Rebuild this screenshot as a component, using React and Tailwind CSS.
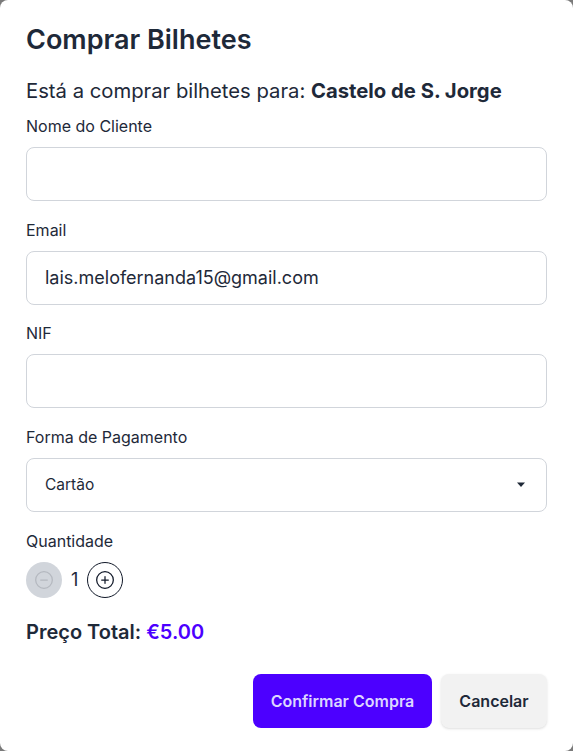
import { CirclePlus, CircleMinus } from 'lucide-react';

function Field({ label, value }) {
  return (
    <div className="mb-[16.5px]">
      <label className="block text-[16px] leading-6 text-gray-800 mb-[9px]">{label}</label>
      <div className="h-[54px] w-full rounded-lg border border-[#d1d5db] bg-white px-[18px] flex items-center text-[18px] text-gray-800">
        {value}
      </div>
    </div>
  );
}

export default function App() {
  return (
    <div className="h-[751px] w-[573px] bg-[#7a7a7a]" style={{ fontFamily: 'Inter, "Noto Sans", sans-serif' }}>
      <div className="h-full w-full rounded-lg bg-white px-[26px] pt-[24px] text-gray-800">
        {/* Header */}
        <h2 className="text-[27px] leading-8 font-semibold text-gray-800">Comprar Bilhetes</h2>
        <p className="mt-[21px] text-[20.25px] leading-7 text-gray-800">
          Está a comprar bilhetes para: <span className="font-bold">Castelo de S. Jorge</span>
        </p>

        <div className="mt-[9px]">
          <Field label="Nome do Cliente" value="" />
          <Field label="Email" value="lais.melofernanda15@gmail.com" />
          <Field label="NIF" value="" />

          <div className="mb-[17px]">
            <label className="block text-[16px] leading-6 text-gray-800 mb-[9px]">Forma de Pagamento</label>
            <div className="h-[54px] w-full rounded-lg border border-[#d1d5db] bg-white pl-[18px] pr-[20px] flex items-center justify-between text-[15.5px] text-gray-800">
              <span>Cartão</span>
              <svg width="10" height="6" viewBox="0 0 10 6">
                <path d="M1 0.5h8L5 5z" fill="#1f2937" />
              </svg>
            </div>
          </div>

          {/* Quantidade */}
          <label className="block text-[16px] leading-6 text-gray-800">Quantidade</label>
          <div className="mt-[9px] flex items-center gap-[8px]">
            <button className="h-9 w-9 rounded-full bg-[#d1d5db] flex items-center justify-center">
              <CircleMinus className="h-5 w-5 text-[#b4b8bf]" strokeWidth={1.5} />
            </button>
            <span className="text-[18px] text-gray-800 mx-[1px]">1</span>
            <button className="h-9 w-9 rounded-full border border-gray-900 bg-white flex items-center justify-center">
              <CirclePlus className="h-5 w-5 text-gray-900" strokeWidth={1.5} />
            </button>
          </div>
        </div>

        <p className="mt-[20px] text-[20px] leading-7 font-semibold text-gray-800">
          Preço Total: <span className="text-[#4c00ff]">€5.00</span>
        </p>

        {/* Actions */}
        <div className="mt-[28px] flex justify-end gap-[9px]">
          <button className="h-[54px] w-[179px] rounded-lg bg-[#4c00ff] text-[16px] font-semibold text-[#dcd6ff]">
            Confirmar Compra
          </button>
          <button className="h-[54px] w-[106px] rounded-lg bg-[#f2f2f2] text-[16px] font-semibold text-gray-800 shadow-sm">
            Cancelar
          </button>
        </div>
      </div>
    </div>
  );
}
